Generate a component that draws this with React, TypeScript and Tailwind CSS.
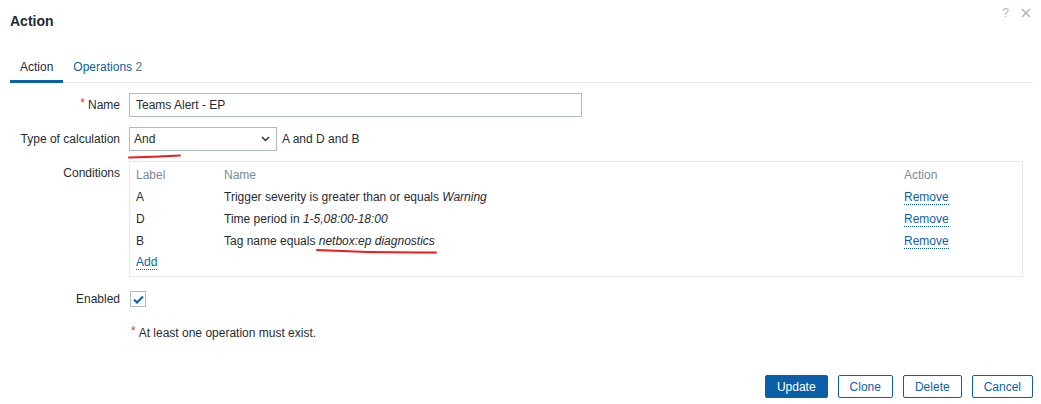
import React from "react";

const blue = "text-[#0a5fa8]";

type RowProps = { label: React.ReactNode; children: React.ReactNode };

const FormRow = ({ label, children }: RowProps) => (
  <>
    <div className="h-[24px] flex items-center justify-end whitespace-nowrap">{label}</div>
    <div className="min-h-[24px] flex items-center">{children}</div>
  </>
);

const LinkText = ({ children }: { children: React.ReactNode }) => (
  <span className={`${blue} border-b border-dotted border-[#0a5fa8] leading-[13px] cursor-pointer`}>{children}</span>
);

const conditions = [
  { label: "A", text: "Trigger severity is greater than or equals ", value: "Warning" },
  { label: "D", text: "Time period in ", value: "1-5,08:00-18:00" },
  { label: "B", text: "Tag name equals ", value: "netbox:ep diagnostics" },
];

export default function App() {
  return (
    <div
      className="relative w-[1041px] h-[404px] bg-white text-[12px] leading-[14px] text-[#1f2c33] overflow-hidden"
      style={{ fontFamily: '"Liberation Sans", Arial, sans-serif' }}
    >
      {/* Header */}
      <div className="h-[50px] flex items-start justify-between pl-[10px] pr-[8px] pt-[13px]">
        <h1 className="text-[14px] leading-[16px] font-bold">Action</h1>
        <div className="flex items-center gap-[12px] -mt-[7px] text-[#a9b4ba]">
          <span className="text-[12px]">?</span>
          <svg width="10" height="10" viewBox="0 0 10 10" className="mr-[2px]">
            <path d="M1 1 L9 9 M9 1 L1 9" stroke="#a9b4ba" strokeWidth="1.4" />
          </svg>
        </div>
      </div>

      {/* Tabs */}
      <div className="mx-[10px] mr-[8px] flex border-b border-[#e6e9eb]">
        <div className="px-[10px] pt-[10px] pb-[6px] border-b-[3px] border-[#0a5fa8] -mb-px">Action</div>
        <div className="px-[10px] pt-[10px] pb-[6px] border-b-[3px] border-transparent -mb-px">
          <span className={blue}>Operations</span> <span className="text-[#5b6b75]">2</span>
        </div>
      </div>

      {/* Form */}
      <div className="grid grid-cols-[120px_1fr] gap-x-[9px] gap-y-[10px] pt-[10px]">
        <FormRow
          label={
            <span>
              <span className="text-[#e33734] relative -top-[2px] mr-[3px]">*</span>Name
            </span>
          }
        >
          <div className="w-[453px] h-[24px] border border-[#acbbc2] flex items-center pl-[6px]">Teams Alert - EP</div>
        </FormRow>

        <FormRow label="Type of calculation">
          <div className="relative w-[148px] h-[24px] border border-[#acbbc2] flex items-center justify-between pl-[4px] pr-[6px]">
            <span>And</span>
            <svg width="9" height="6" viewBox="0 0 9 6">
              <path d="M1 1 L4.5 4.5 L8 1" stroke="#1f2c33" strokeWidth="1.4" fill="none" />
            </svg>
            <svg className="absolute left-[-2px] top-[25px]" width="54" height="6" viewBox="0 0 54 6">
              <path d="M1 4.5 Q 25 4 52 2.5" stroke="#ee1c1c" strokeWidth="2" fill="none" strokeLinecap="round" />
            </svg>
          </div>
          <span className="ml-[5px]">A and D and B</span>
        </FormRow>

        <div className="flex justify-end pt-[5px]">Conditions</div>
        <div className="w-[894px] border border-[#e6e9eb] pt-[2px] pb-[2px] pl-[6px]">
          <div className="grid grid-cols-[88px_680px_1fr] h-[22px] items-center text-[#768d99]">
            <span>Label</span>
            <span>Name</span>
            <span>Action</span>
          </div>
          {conditions.map((c) => (
            <div key={c.label} className="grid grid-cols-[88px_680px_1fr] h-[22px] items-center">
              <span>{c.label}</span>
              <span className="relative">
                {c.text}
                <i>{c.value}</i>
                {c.label === "B" && (
                  <svg className="absolute left-[91px] top-[14px]" width="124" height="7" viewBox="0 0 124 7">
                    <path d="M2 2 Q 60 5 121 4.5" stroke="#ee1c1c" strokeWidth="2" fill="none" strokeLinecap="round" />
                  </svg>
                )}
              </span>
              <span>
                <LinkText>Remove</LinkText>
              </span>
            </div>
          ))}
          <div className="h-[22px] flex items-center">
            <LinkText>Add</LinkText>
          </div>
        </div>

        <FormRow label="Enabled">
          <div className="ml-[1px] w-[16px] h-[16px] border border-[#acbbc2] flex items-center justify-center">
            <svg width="11" height="9" viewBox="0 0 11 9">
              <path d="M1 4.5 L4 7.5 L10 1.5" stroke="#0a5fa8" strokeWidth="2" fill="none" />
            </svg>
          </div>
        </FormRow>

        <div />
        <div className="h-[24px] flex items-center pl-[2px]">
          <span className="text-[#e33734] relative -top-[2px] mr-[3px]">*</span>
          <span>At least one operation must exist.</span>
        </div>
      </div>

      {/* Footer buttons */}
      <div className="flex justify-end gap-[10px] pr-[8px] mt-[30px]">
        <button className="h-[23px] px-[11px] bg-[#0a5fa8] border border-[#0a5fa8] text-white rounded-[2px]">Update</button>
        <button className={`h-[23px] px-[11px] bg-white border border-[#0a5fa8] ${blue} rounded-[2px]`}>Clone</button>
        <button className={`h-[23px] px-[11px] bg-white border border-[#0a5fa8] ${blue} rounded-[2px]`}>Delete</button>
        <button className={`h-[23px] px-[11px] bg-white border border-[#0a5fa8] ${blue} rounded-[2px]`}>Cancel</button>
      </div>
    </div>
  );
}
